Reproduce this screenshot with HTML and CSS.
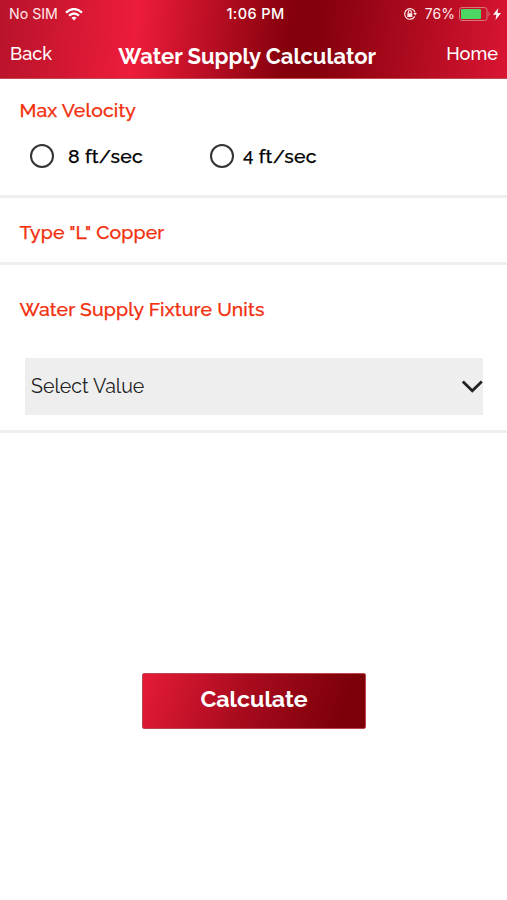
FILE: index.html
```html
<!DOCTYPE html>
<html lang="en">
<head>
<meta charset="utf-8">
<title>Water Supply Calculator</title>
<link rel="stylesheet" href="styles.css">
</head>
<body>
<header class="header">
  <div class="status">
    <div class="carrier"><span class="sim">No SIM</span>
      <svg class="wifi" width="18" height="13" viewBox="0 0 18 13" fill="none" stroke="#fff" stroke-width="2.2"><path d="M1 4.6Q9-2.6 17 4.6M4 7.7Q9 3.3 14 7.7"/><path d="M6.4 9.8Q9 7.7 11.6 9.8L9 12.5Z" fill="#fff" stroke="none"/></svg>
    </div>
    <time class="time">1:06 PM</time>
    <div class="power">
      <svg width="14" height="14" viewBox="0 0 14 14" fill="none" stroke="#ffe9e9" stroke-width="1.2"><path d="M11.7 9.4A5.3 5.3 0 1 1 12.1 5.5"/><path d="M10.3 6.1H14L12.2 8.5Z" fill="#ffe9e9" stroke="none"/><rect x="4.3" y="6.2" width="5" height="3.8" fill="#ffe9e9" stroke="none"/><path d="M5.3 6.3V5a1.5 1.5 0 0 1 3 0v1.3"/></svg>
      <span class="percent">76%</span>
      <svg class="battery" width="32" height="14" viewBox="0 0 32 14"><rect x=".5" y=".5" width="27.5" height="13" rx="2.5" fill="none" stroke="#d9777d"/><rect x="2" y="2" width="20" height="10" rx="1" fill="#4cd663"/><path d="M29.5 4.5Q32 7 29.5 9.5Z" fill="#d9777d"/></svg>
      <svg class="bolt" width="8" height="12" viewBox="0 0 8 12"><path d="M5.3 0L0 6.7H3.4L2.5 12L8 4.9H4.5Z" fill="#fff"/></svg>
    </div>
  </div>
  <nav class="nav"><a class="back">Back</a><h1 class="title">Water Supply Calculator</h1><a class="home">Home</a></nav>
</header>
<main>
  <section class="section velocity">
    <h2 class="heading">Max Velocity</h2>
    <div class="options">
      <label class="option"><span class="radio"></span><span class="option-text">8 ft/sec</span></label>
      <label class="option near"><span class="radio"></span><span class="option-text"><span class="lining">4</span> ft/sec</span></label>
    </div>
  </section>
  <section class="section copper"><h2 class="heading">Type "L" Copper</h2></section>
  <section class="section units">
    <h2 class="heading">Water Supply Fixture Units</h2>
    <div class="select"><span class="value">Select Value</span>
      <svg width="22" height="14" viewBox="0 0 22 14" fill="none" stroke="#222" stroke-width="2.8"><path d="M1.8 1.5L11.3 10.7L20.8 1.5"/></svg>
    </div>
  </section>
  <button class="calculate">Calculate</button>
</main>
</body>
</html>
```
FILE: styles.css
```css
* { box-sizing: border-box; }
body {
  margin: 0;
  height: 900px;
  background: #fff;
  color: #111;
  font-family: Raleway, Lato, sans-serif;
  overflow: hidden;
}
h1, h2 { margin: 0; }
.header {
  height: 79px;
  color: #fff;
  background: linear-gradient(97deg, #b7132a 0%, #ed1c3b 27%, #84000b 57%, #84000b 62%, #d91533 100%);
  border-bottom: 1px solid #c34856;
}
.status {
  height: 28px;
  display: grid;
  grid-template-columns: 1fr auto 1fr;
  align-items: center;
  font: 15px/28px Inter, sans-serif;
  padding: 0 6px 0 9px;
}
.carrier, .power { display: flex; align-items: center; }
.carrier { gap: 7px; }
.sim { font-size: 14.2px; color: #ffe9e9; }
.time { font-size: 14.5px; font-weight: 500; letter-spacing: .4px; padding-left: 1px; }
.power { justify-content: flex-end; }
.percent { margin: 0 4px 0 8px; font-size: 14px; color: #ffe9e9; }
.battery { margin-right: -1px; }
.bolt { margin-left: 3px; }
.nav {
  display: flex;
  justify-content: space-between;
  padding: 0 9px 0 10px;
  height: 50px;
}
.back, .home { font-size: 18.2px; line-height: 51px; font-weight: 500; }
.home { text-align: right; }
.title { margin-right: 4px; font-size: 22px; line-height: 56px; font-weight: 700; }
.section { border-bottom: 3px solid #eee; }
.heading { color: #f2300f; font-size: 19.4px; font-weight: 500; line-height: 24px; letter-spacing: .14px; -webkit-text-stroke: .25px; }
.velocity { height: 119px; padding: 20px 20px 0 19.5px; }
.options { display: flex; margin: 21px 0 0 10.5px; }
.option { display: flex; align-items: center; width: 180px; gap: 14px; height: 24px; }
.option.near { gap: 9px; }
.radio { width: 24px; height: 24px; border: 2px solid #333; border-radius: 50%; }
.option-text { font-size: 19.4px; font-weight: 500; color: #000; letter-spacing: .22px; -webkit-text-stroke: .25px; }
.lining { font-variant-numeric: lining-nums; font-size: 18px; display: inline-block; transform: translateY(1px); }
.copper { height: 67px; padding: 23px 20px 0 19.5px; }
.units { height: 168px; padding: 33px 24px 0 19.5px; }
.select {
  margin: 36px 0 0 5.5px;
  height: 57px;
  background: #eee;
  display: flex;
  align-items: center;
  justify-content: space-between;
  padding-left: 6px;
}
.value { color: #222; font-size: 19.6px; }
.calculate {
  display: block;
  width: 224px;
  height: 56px;
  margin: 240px 0 0 142px;
  padding: 0 0 5px;
  color: #fff;
  border: 1px solid #bd4350;
  border-radius: 2px;
  background: linear-gradient(110deg, #e51b38 0%, #a80b1d 46%, #7d0009 88%);
  font: 700 23.2px/1 Raleway, Lato, sans-serif;
}
```
